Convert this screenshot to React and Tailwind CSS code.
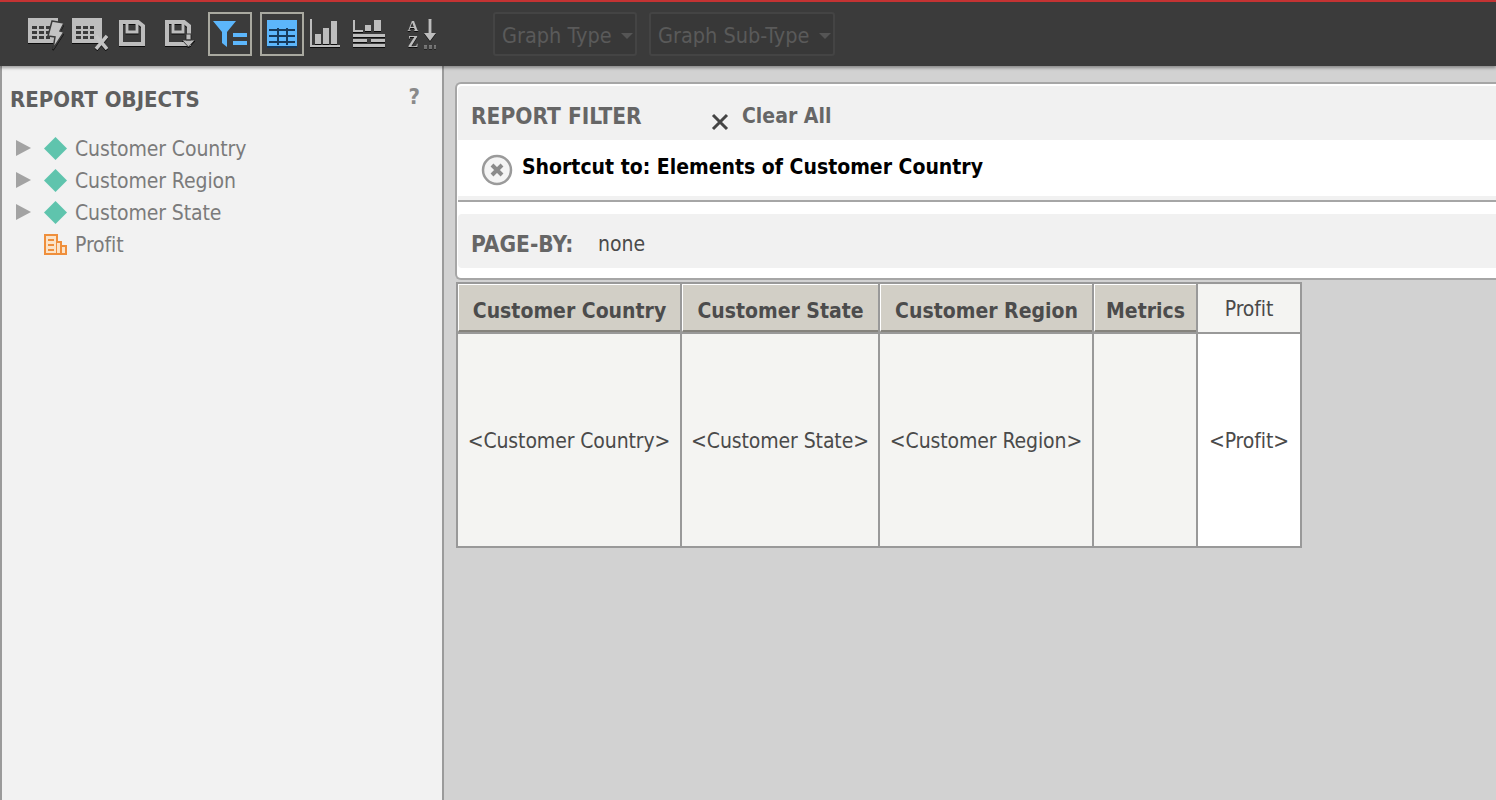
import React from "react";

const font = "font-['DejaVu_Sans_Condensed','Liberation_Sans',sans-serif]";

const TableLines = () => (
  <g fill="#3b3b3b">
    <rect x="4" y="8" width="5" height="3" />
    <rect x="11" y="8" width="5" height="3" />
    <rect x="18" y="8" width="4" height="3" />
    <rect x="4" y="13" width="5" height="3" />
    <rect x="11" y="13" width="5" height="3" />
    <rect x="18" y="13" width="4" height="3" />
    <rect x="4" y="18" width="5" height="3" />
    <rect x="11" y="18" width="5" height="3" />
    <rect x="18" y="18" width="4" height="3" />
  </g>
);

const iconShadow = "drop-shadow-[0_1px_0_#0c0c0c]";

const RunIcon = () => (
  <svg width="36" height="32" viewBox="0 0 36 32" className={iconShadow}>
    <rect x="0" y="0" width="30" height="25" fill="#bdbdbd" />
    <TableLines />
    <path d="M24 3 L36 5 L32 13 L36 14 L25 31 L27 19 L20 18 Z" fill="#c4c4c4" stroke="#3b3b3b" strokeWidth="1.5" />
  </svg>
);

const ClearIcon = () => (
  <svg width="36" height="32" viewBox="0 0 36 32" className={iconShadow}>
    <rect x="0" y="0" width="30" height="25" fill="#bdbdbd" />
    <TableLines />
    <path d="M24 18 L35 31 M35 18 L24 31" stroke="#c4c4c4" strokeWidth="3.5" />
  </svg>
);

const SaveIcon = ({ arrow }) => (
  <svg width="30" height="28" viewBox="0 0 30 28" className={iconShadow}>
    <path d="M2 2 H19 L24 6 V24 H2 Z" fill="none" stroke="#bdbdbd" strokeWidth="4" />
    <path d="M8 0 V12 H18 V0" fill="none" stroke="#bdbdbd" strokeWidth="3" />
    {arrow && <path d="M17 20 H30 L23.5 27 Z M21 14 H26 V20 H21 Z" fill="#bdbdbd" stroke="#3b3b3b" strokeWidth="1" />}
  </svg>
);

const FilterIcon = () => (
  <svg width="34" height="26" viewBox="0 0 34 26">
    <path d="M0 0 H23 L14 11 V26 L9 22 V11 Z" fill="#5cb6fb" />
    <rect x="20" y="12" width="14" height="4" fill="#5cb6fb" />
    <rect x="20" y="20" width="14" height="4" fill="#5cb6fb" />
  </svg>
);

const GridIcon = () => (
  <svg width="30" height="28" viewBox="0 0 30 28">
    <rect width="30" height="27" fill="#5cb6fb" />
    <path d="M2 10 H28 M2 16 H28 M2 22 H28 M11 8 V25 M20 8 V25" stroke="#173a5b" strokeWidth="2" />
    <rect y="26" width="30" height="2" fill="#173a5b" />
  </svg>
);

const BarsIcon = () => (
  <svg width="30" height="30" viewBox="0 0 30 30" className={iconShadow}>
    <path d="M1 0 V27 H30" fill="none" stroke="#bdbdbd" strokeWidth="2" />
    <rect x="5" y="15" width="6" height="10" fill="#bdbdbd" />
    <rect x="13" y="9" width="6" height="16" fill="#bdbdbd" />
    <rect x="21" y="2" width="6" height="23" fill="#bdbdbd" />
  </svg>
);

const GridGraphIcon = () => (
  <svg width="32" height="28" viewBox="0 0 32 28" className={iconShadow}>
    <path d="M1 0 V11 H10" fill="none" stroke="#bdbdbd" strokeWidth="2" />
    <rect x="12" y="5" width="6" height="6" fill="#bdbdbd" />
    <rect x="21" y="0" width="7" height="11" fill="#bdbdbd" />
    <rect x="0" y="14" width="32" height="3" fill="#bdbdbd" />
    <rect x="0" y="24" width="32" height="3" fill="#bdbdbd" />
    <rect x="0" y="19" width="14" height="3" fill="#bdbdbd" />
    <rect x="18" y="19" width="14" height="3" fill="#bdbdbd" />
  </svg>
);

const SortIcon = () => (
  <svg width="32" height="30" viewBox="0 0 32 30" className={iconShadow}>
    <text x="7" y="12" textAnchor="middle" fontSize="15" fontWeight="700" fontFamily="'Liberation Serif', serif" fill="#bdbdbd">A</text>
    <text x="7" y="28" textAnchor="middle" fontSize="16" fontWeight="700" fontFamily="'Liberation Serif', serif" fill="#bdbdbd">Z</text>
    <path d="M24 0 V17" stroke="#bdbdbd" strokeWidth="3" />
    <path d="M18 14 H30 L24 22 Z" fill="#bdbdbd" />
    <path d="M18 27 H30 M18 29 H30" stroke="#bdbdbd" strokeWidth="1" strokeDasharray="3 2" />
  </svg>
);

const Caret = () => (
  <span className="ml-auto h-0 w-0 border-x-[6px] border-t-[6px] border-x-transparent border-t-[#555555]" />
);

const TreeRow = ({ label }) => (
  <div className="flex h-8 items-center">
    <svg width="16" height="20" viewBox="0 0 16 20" className="ml-[16px] mr-[12px]">
      <path d="M0 2 L15 10 L0 18 Z" fill="#a3a3a3" />
    </svg>
    <svg width="23" height="23" viewBox="0 0 23 23">
      <path d="M11.5 0 L23 11.5 L11.5 23 L0 11.5 Z" fill="#5fc4ad" />
    </svg>
    <span className="ml-[8px] mt-[4px] text-[21px] tracking-[-0.1px] text-[#7b7b7b]">{label}</span>
  </div>
);

const headCell = "border-2 border-[#999999] p-0 text-center text-[21px] font-bold text-[#4c4c4c]";
const bodyCell = "border-2 border-[#999999] bg-[#f4f4f2] p-0 pt-[4px] text-center text-[21px] tracking-[-0.1px] text-[#4a4a4a]";
const headInner = "flex h-[48px] items-center justify-center border-t border-l border-white border-b-2 border-b-[#85837d] bg-[#d2cfc6] pt-[8px]";

export default function App() {
  return (
    <div className={`${font} flex h-[800px] flex-col overflow-hidden`}>
      {/* toolbar */}
      <div className="relative z-10 flex h-[66px] shrink-0 items-center border-t-2 border-t-[#c43333] bg-[#3b3b3b] shadow-[0_2px_3px_rgba(0,0,0,0.35)]">
        <div className="ml-[28px] flex items-center">
          <div className="flex w-[44px]"><RunIcon /></div>
          <div className="flex w-[47px]"><ClearIcon /></div>
          <div className="flex w-[46px]"><SaveIcon /></div>
          <div className="flex w-[43px]"><SaveIcon arrow /></div>
          <div className="flex h-[44px] w-[44px] items-center justify-center border-2 border-[#a9a9a0]"><FilterIcon /></div>
          <div className="ml-[8px] flex h-[44px] w-[44px] items-center justify-center border-2 border-[#a9a9a0]"><GridIcon /></div>
          <div className="ml-[6px] flex w-[43px]"><BarsIcon /></div>
          <div className="flex w-[53px]"><GridGraphIcon /></div>
          <div className="flex w-[40px]"><SortIcon /></div>
        </div>
        <div className="ml-[47px] flex h-[44px] w-[144px] items-center whitespace-nowrap rounded-[3px] border-2 border-[#444444] bg-[#383838] pl-[7px] pr-[2px] pt-[4px] text-[21.5px] text-[#5a5a5a]">
          Graph Type
          <Caret />
        </div>
        <div className="ml-[12px] flex h-[44px] w-[186px] items-center whitespace-nowrap rounded-[3px] border-2 border-[#444444] bg-[#383838] pl-[7px] pr-[2px] pt-[4px] text-[21.5px] text-[#5a5a5a]">
          Graph Sub-Type
          <Caret />
        </div>
      </div>

      <div className="flex min-h-0 flex-1">
        {/* report objects */}
        <div className="w-[444px] shrink-0 border-x-2 border-x-[#9b9b9b] bg-[#f2f2f2]">
          <div className="flex h-[62px] items-center justify-between pl-[8px] pr-[22px] pt-[4px]">
            <span className="text-[22px] font-bold text-[#5f5f5f]">REPORT OBJECTS</span>
            <span className="-mt-[6px] text-[22px] font-bold text-[#8a8a8a]">?</span>
          </div>
          <div className="-ml-[2px] mt-[4px]">
            <TreeRow label="Customer Country" />
            <TreeRow label="Customer Region" />
            <TreeRow label="Customer State" />
            <div className="flex h-8 items-center pl-[44px]">
              <svg width="23" height="21" viewBox="0 0 23 21">
                <path d="M1 1 H13 V20 H1 Z" fill="#fbe3c8" stroke="#ef8f3c" strokeWidth="2" />
                <path d="M13 8 H17 V20 H13 M17 12 H22 V20 H17" fill="#fbe3c8" stroke="#ef8f3c" strokeWidth="2" />
                <path d="M4 6 H10 M4 11 H10 M4 16 H10" stroke="#ef8f3c" strokeWidth="2" />
              </svg>
              <span className="ml-[8px] mt-[4px] text-[21px] tracking-[-0.1px] text-[#7b7b7b]">Profit</span>
            </div>
          </div>
        </div>

        {/* report area */}
        <div className="min-w-0 flex-1 bg-[#d2d2d2] pt-[16px] pl-[11px]">
          <div className="rounded-l-[6px] border-y-2 border-l-2 border-[#a6a6a6] bg-white pl-[1px] pt-[2px]">
            <div className="flex h-[54px] items-center rounded-tl-[4px] bg-[#f1f1f1] pl-[13px] pt-[7px]">
              <span className="w-[240px] text-[22.5px] font-bold text-[#666666]">REPORT FILTER</span>
              <svg width="18" height="18" viewBox="0 0 18 18" className="mt-[11px]">
                <path d="M2 2 L16 16 M16 2 L2 16" stroke="#444444" strokeWidth="3" />
              </svg>
              <span className="ml-[13px] text-[21px] font-bold text-[#666666]">Clear All</span>
            </div>
            <div className="flex h-[56px] items-center pl-[23px]">
              <svg width="32" height="32" viewBox="0 0 32 32" className="mt-[4px]">
                <circle cx="16" cy="16" r="14" fill="#f4f4f4" stroke="#9a9a9a" strokeWidth="2.5" />
                <path d="M11 11 L21 21 M21 11 L11 21" stroke="#8b8b8b" strokeWidth="4" />
              </svg>
              <span className="ml-[9px] text-[21px] font-bold text-black">Shortcut to: Elements of Customer Country</span>
            </div>
            <div className="h-[4px] bg-[#f1f1f1]" />
            <div className="h-[2px] bg-[#a6a6a6]" />
            <div className="mt-[12px] flex h-[54px] items-center rounded-l-[4px] bg-[#f1f1f1] pl-[13px] pt-[8px]">
              <span className="w-[127px] text-[22.5px] font-bold text-[#666666]">PAGE-BY:</span>
              <span className="text-[21px] text-[#4a4a4a]">none</span>
            </div>
            <div className="h-[10px]" />
          </div>

          <table className="mt-[2px] ml-[1px] w-[844px] table-fixed border-collapse">
            <colgroup>
              <col className="w-[224px]" />
              <col className="w-[198px]" />
              <col className="w-[214px]" />
              <col className="w-[104px]" />
              <col className="w-[104px]" />
            </colgroup>
            <tbody>
              <tr className="h-[50px]">
                <th className={headCell}><div className={headInner}>Customer Country</div></th>
                <th className={headCell}><div className={headInner}>Customer State</div></th>
                <th className={headCell}><div className={headInner}>Customer Region</div></th>
                <th className={headCell}><div className={headInner}>Metrics</div></th>
                <td className="border-2 border-[#999999] bg-[#f4f4f2] p-0 pt-[4px] text-center text-[21px] tracking-[-0.1px] text-[#4a4a4a]">Profit</td>
              </tr>
              <tr className="h-[214px]">
                <td className={bodyCell}>&lt;Customer Country&gt;</td>
                <td className={bodyCell}>&lt;Customer State&gt;</td>
                <td className={bodyCell}>&lt;Customer Region&gt;</td>
                <td className={bodyCell}></td>
                <td className="border-2 border-[#999999] bg-white p-0 pt-[4px] text-center text-[21px] tracking-[-0.1px] text-[#4a4a4a]">&lt;Profit&gt;</td>
              </tr>
            </tbody>
          </table>
        </div>
      </div>
    </div>
  );
}
